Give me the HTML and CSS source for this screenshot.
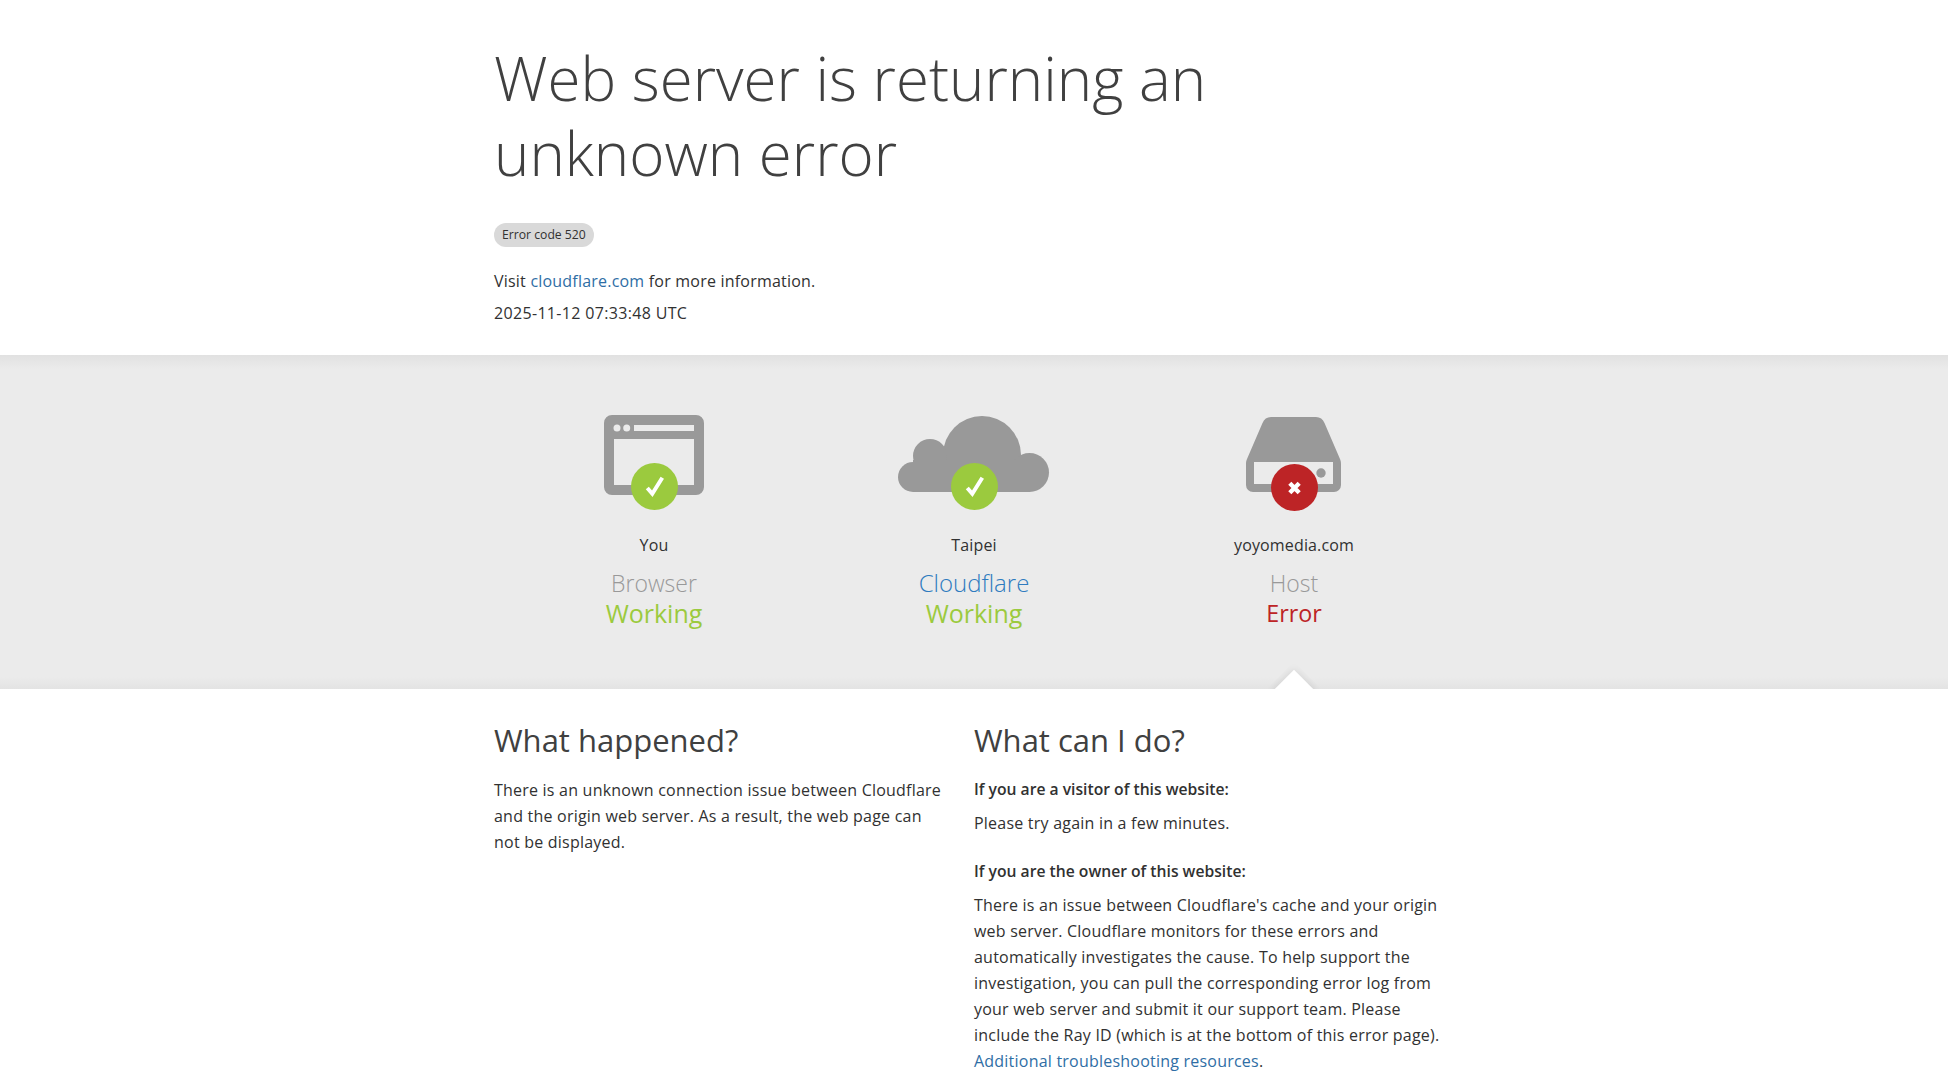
FILE: index.html
```html
<!DOCTYPE html>
<html lang="en">
<head>
<meta charset="utf-8">
<title>Web server is returning an unknown error</title>
<link rel="stylesheet" href="styles.css">
</head>
<body>
<div class="page">
  <header class="container head">
    <h1>Web server is returning an unknown error</h1>
    <div class="pill">Error code 520</div>
    <p class="visit">Visit <a href="#">cloudflare.com</a> for more information.</p>
    <p class="time">2025-11-12 07:33:48 UTC</p>
  </header>
  <section class="band">
    <div class="container status">
      <div class="node">
        <div class="icon">
          <svg width="100" height="80" viewBox="0 0 100 80"><path fill="#999" fill-rule="evenodd" d="M8 0h84a8 8 0 0 1 8 8v64a8 8 0 0 1-8 8H8a8 8 0 0 1-8-8V8a8 8 0 0 1 8-8zM10 24v46h80V24zM30 10v6h60v-6z"/><circle cx="13" cy="13" r="3.5" fill="#ebebeb"/><circle cx="22.7" cy="13" r="3.5" fill="#ebebeb"/></svg>
          <span class="badge ok"><svg width="47" height="47" viewBox="0 0 47 47"><path d="M16.3 25l5 5.7 10-16" fill="none" stroke="#fff" stroke-width="4"/></svg></span>
        </div>
        <div class="where">You</div>
        <div class="role">Browser</div>
        <div class="state good">Working</div>
      </div>
      <div class="node">
        <div class="icon">
          <svg class="cloud" width="152" height="76" viewBox="0 0 152 76"><g fill="#999"><circle cx="84" cy="39" r="39"/><circle cx="32" cy="40" r="17"/><circle cx="15" cy="61" r="15"/><circle cx="131.500" cy="56.500" r="19.500"/><rect x="15" y="44" width="117" height="32"/></g></svg>
          <span class="badge ok"><svg width="47" height="47" viewBox="0 0 47 47"><path d="M16.3 25l5 5.7 10-16" fill="none" stroke="#fff" stroke-width="4"/></svg></span>
        </div>
        <div class="where">Taipei</div>
        <div class="role link">Cloudflare</div>
        <div class="state good">Working</div>
      </div>
      <div class="node">
        <div class="icon">
          <svg class="server" width="95" height="76" viewBox="0 0 95 76"><path fill="#999" fill-rule="evenodd" d="M25 0h45c4 0 7 2 8.500 6L94 42c.7 1.500 1 3 1 5v21a7 7 0 0 1-7 7H7a7 7 0 0 1-7-7V47c0-2 .3-3.500 1-5L16.500 6C18 2 21 0 25 0zM8 45v22h79V45z"/><circle cx="75" cy="56" r="4.700" fill="#999"/></svg>
          <span class="badge bad"><svg width="47" height="47" viewBox="0 0 47 47"><path d="M18.800 19.300l9.400 9.400m0-9.400l-9.400 9.400" fill="none" stroke="#fff" stroke-width="4.400"/></svg></span>
        </div>
        <div class="where">yoyomedia.com</div>
        <div class="role">Host</div>
        <div class="state err">Error</div>
        <span class="arrow"></span>
      </div>
    </div>
  </section>
  <section class="container info">
    <div class="col col-left">
      <h2>What happened?</h2>
      <p class="lead">There is an unknown connection issue between Cloudflare and the origin web server. As a result, the web page can not be displayed.</p>
    </div>
    <div class="col col-right">
      <h2>What can I do?</h2>
      <h5>If you are a visitor of this website:</h5>
      <p class="gap lead">Please try again in a few minutes.</p>
      <h5>If you are the owner of this website:</h5>
      <p class="lead">There is an issue between Cloudflare's cache and your origin web server. Cloudflare monitors for these errors and automatically investigates the cause. To help support the investigation, you can pull the corresponding error log from your web server and submit it our support team. Please include the Ray ID (which is at the bottom of this error page). <a href="#">Additional troubleshooting resources</a>.</p>
    </div>
  </section>
</div>
</body>
</html>
```
FILE: styles.css
```css
* { box-sizing: border-box; }
html, body { margin: 0; padding: 0; background: #fff; }
body { font-family: "Open Sans", "Noto Sans", sans-serif; font-size: 16px; line-height: 26px; color: #313131; }
a { color: #2f6ea5; text-decoration: none; }
.page { height: 100vh; overflow: hidden; }
.container { width: 960px; margin: 0 auto; }
.head { padding-top: 41px; height: 355px; }
h1 { margin: 0 0 32px; width: 760px; font-size: 60px; font-weight: 300; line-height: 75px; color: #404040; }
.pill { display: inline-block; vertical-align: top; height: 24px; padding: 0 8px; border-radius: 12px; background: #d9d9d9; font-size: 12.2px; line-height: 24px; }
.visit { margin: 19px 0 0; letter-spacing: .21px; }
.time { margin: 6px 0 0; letter-spacing: .33px; }
.band { height: 334px; padding-top: 60px; background: linear-gradient(#e1e1e1, #ebebeb 14px, #ebebeb calc(100% - 12px), #e3e3e3); }
.status { display: grid; grid-template-columns: repeat(3, 1fr); }
.node { position: relative; display: flex; flex-direction: column; align-items: center; text-align: center; }
.icon { position: relative; height: 80px; width: 100%; display: flex; justify-content: center; align-items: flex-start; }
.cloud { margin-top: 1px; }
.server { margin: 2px 1px 0 0; }
.badge { position: absolute; left: 137px; top: 48px; width: 47px; height: 47px; border-radius: 50%; }
.bad { top: 49px; }
.badge svg { display: block; }
.ok { background: #9bca3e; }
.bad { background: #bd2426; }
.where { margin-top: 37px; height: 26px; letter-spacing: .15px; }
.role { margin-top: 10px; font-size: 23px; font-weight: 300; line-height: 30px; color: #999; }
.role.link { font-size: 24px; color: #2f7bbf; }
.state { font-size: 23.3px; line-height: 30px; }
.good { font-size: 25px; color: #9bca3e; }
.err { color: #bd2426; }
.arrow { position: absolute; left: 50%; top: 261px; width: 30px; height: 30px; margin-left: -15px; background: #fff; transform: rotate(45deg); box-shadow: 0 0 8px rgba(0,0,0,.12); clip-path: polygon(-20% -20%, 120% -20%, 100% 0, 0 100%, -20% 120%); }
.info { display: grid; grid-template-columns: 480px 480px; padding-top: 32px; position: relative; background: #fff; }
.col-left { padding-right: 24px; }
.col-right { padding-right: 8px; }
h2 { margin: 0 0 18px; font-size: 31px; font-weight: 400; line-height: 38px; color: #404040; }
h5 { margin: 0 0 9px; font-size: 15.7px; font-weight: 600; line-height: 24px; }
p { margin: 0; }
.lead { letter-spacing: .22px; }
.gap { margin-bottom: 23px; }
```
